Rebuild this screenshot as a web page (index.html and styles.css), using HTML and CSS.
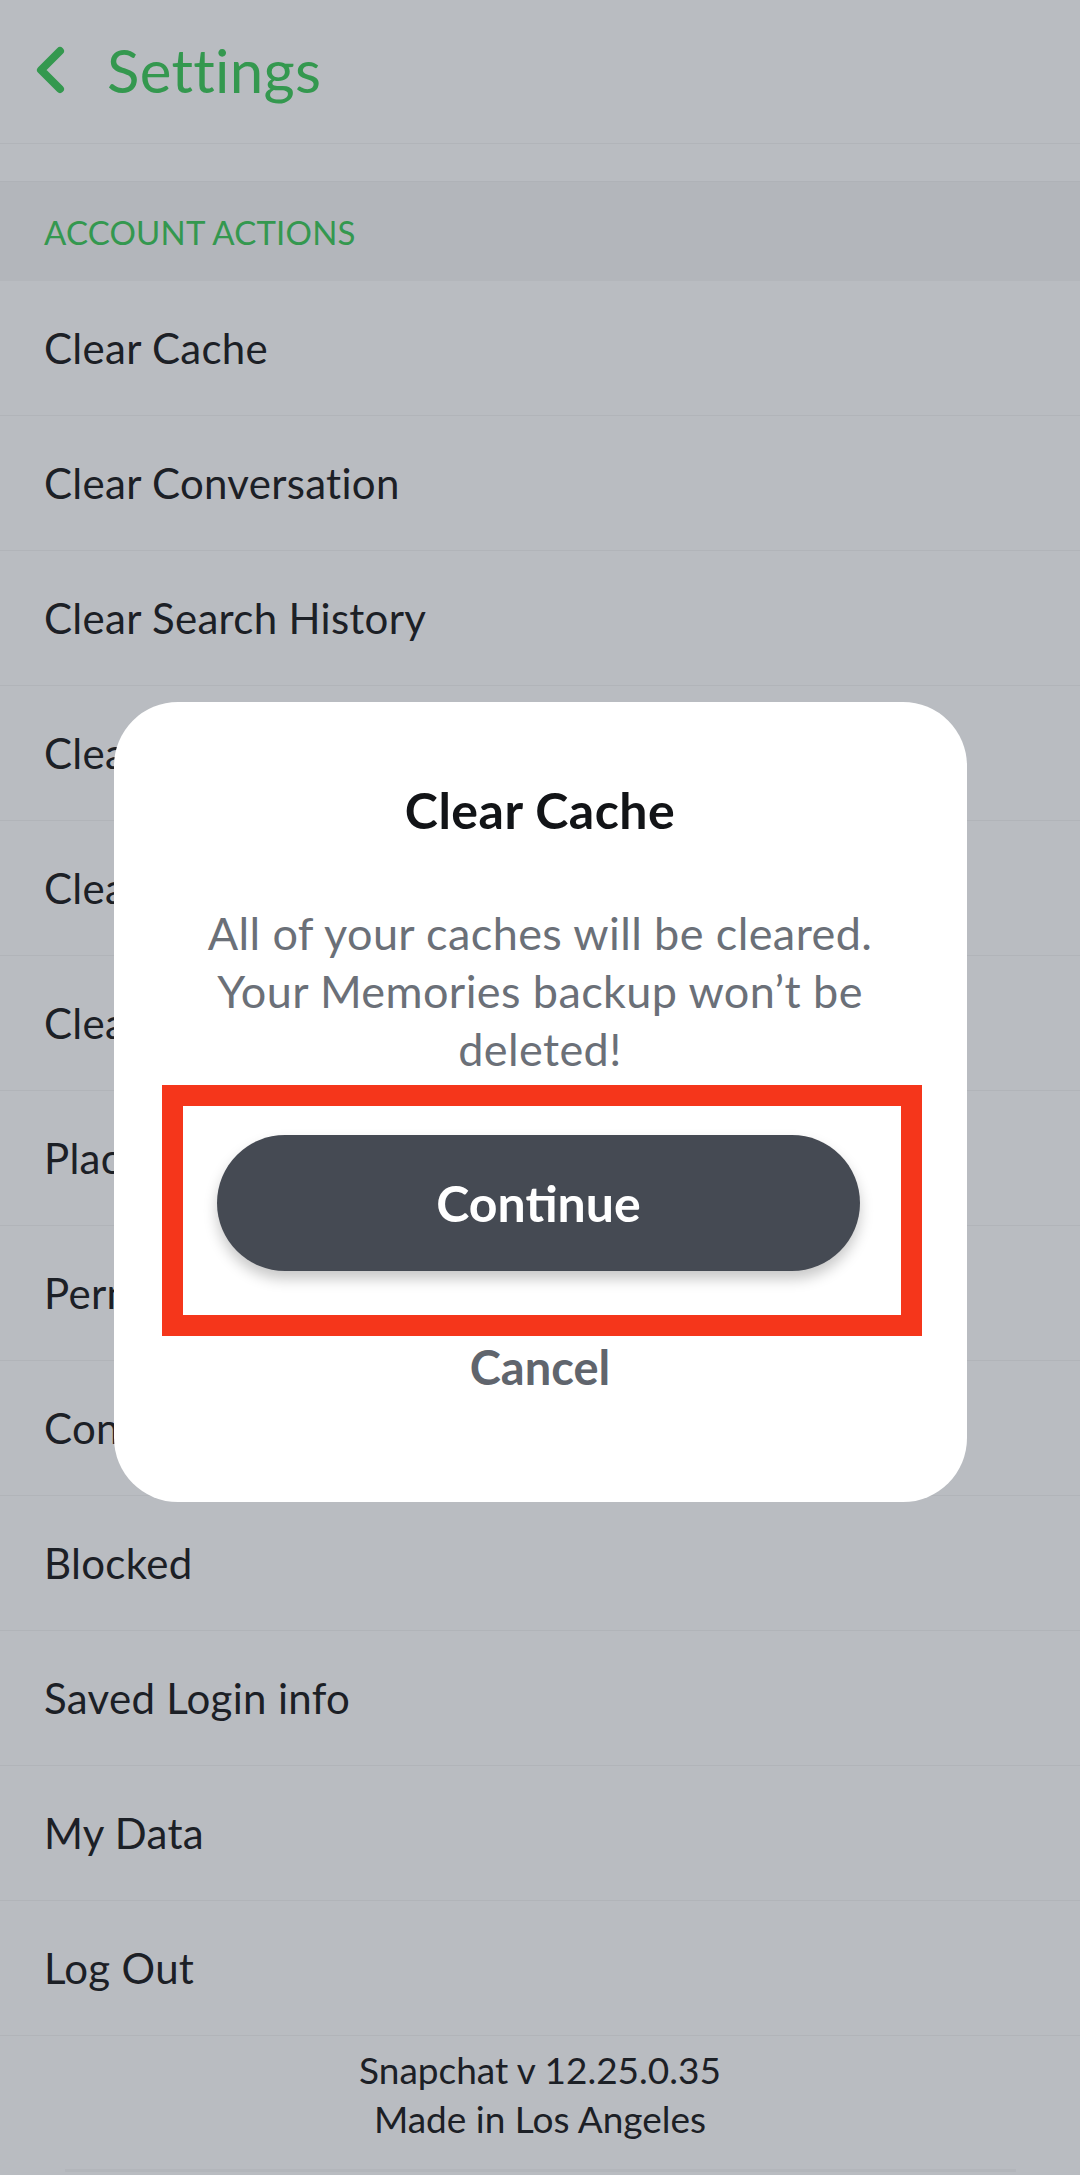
FILE: index.html
```html
<!DOCTYPE html>
<html>
<head>
  <title>Settings</title>
  <link rel="stylesheet" href="styles.css">
</head>
<body>
  <div class="screen">
    <header class="topbar">
      <svg class="back" width="34" height="52" viewBox="0 0 34 52">
        <polyline points="27,7 8,26 27,45" fill="none" stroke="#34984f" stroke-width="8" stroke-linecap="round" stroke-linejoin="round"/>
      </svg>
      <h1>Settings</h1>
    </header>

    <div class="gap"></div>
    <div class="section-title">ACCOUNT ACTIONS</div>

    <ul class="rows">
      <li>Clear Cache</li>
      <li>Clear Conversation</li>
      <li>Clear Search History</li>
      <li>Clear Top Locals</li>
      <li>Clear Scan History</li>
      <li>Clear Lens Data</li>
      <li>Places</li>
      <li>Permissions</li>
      <li>Connected Apps</li>
      <li>Blocked</li>
      <li>Saved Login info</li>
      <li>My Data</li>
      <li>Log Out</li>
    </ul>

    <footer class="about">
      <p>Snapchat v 12.25.0.35<br>Made in Los Angeles</p>
      <div class="home-line"></div>
    </footer>
  </div>

  <!-- alert sheet over the list -->
  <div class="overlay">
    <div class="dialog">
      <h2>Clear Cache</h2>
      <p class="msg">All of your caches will be cleared.<br>Your Memories backup won’t be<br>deleted!</p>
      <div class="highlight">
        <button class="primary">Continue</button>
      </div>
      <button class="cancel">Cancel</button>
    </div>
  </div>
</body>
</html>
```

FILE: styles.css
```css
html, body {
  margin: 0;
  background: #b9bcc1;
}

body {
  width: 1080px;
  height: 2175px;
  position: relative;
  overflow: hidden;
  font-family: Lato, "Open Sans", sans-serif;
  color: #1c2026;
}

.topbar {
  height: 144px;
  display: flex;
  align-items: center;
  padding: 0 0 4px 33px;
  box-sizing: border-box;
  border-bottom: 1px solid #b1b4b9;
}

.back {
  margin-right: 40px;
}

.topbar h1 {
  margin: 0;
  font-size: 60px;
  font-weight: 400;
  line-height: 72px;
  color: #34984f;
  letter-spacing: 0.3px;
}

.gap {
  height: 37px;
}

.section-title {
  height: 100px;
  display: flex;
  align-items: center;
  padding-left: 44px;
  background: #b3b6bb;
  border-top: 1px solid #afb2b7;
  box-sizing: border-box;
  font-size: 33px;
  color: #34984f;
  letter-spacing: 0.2px;
}

.rows {
  list-style: none;
  margin: 0;
  padding: 0;
}

.rows li {
  height: 135px;
  display: flex;
  align-items: center;
  padding-left: 44px;
  box-sizing: border-box;
  border-bottom: 1px solid #b1b4b9;
  font-size: 42px;
  letter-spacing: 0.3px;
}

.about {
  text-align: center;
  font-size: 37px;
}

.about p {
  margin: 0;
  padding-top: 9px;
  line-height: 49px;
}

.home-line {
  height: 3px;
  margin: 26px 64px 0 65px;
  background: #b3b6bb;
}

/* overlay */
.overlay {
  position: absolute;
  top: 0;
  left: 0;
  right: 0;
  padding-top: 702px;
}

.dialog {
  width: 853px;
  height: 800px;
  margin: 0 auto;
  box-sizing: border-box;
  background: #fff;
  border-radius: 64px;
  padding-top: 78px;
  text-align: center;
  display: flex;
  flex-direction: column;
  align-items: center;
}

.dialog h2 {
  margin: 0;
  font-size: 50px;
  line-height: 60px;
  font-weight: 700;
  color: #121417;
  letter-spacing: 0.5px;
}

.msg {
  margin: 64px 0 0;
  font-size: 45px;
  line-height: 58px;
  color: #6b7078;
  letter-spacing: 0.4px;
}

.highlight {
  width: 760px;
  margin: 7px 0 0 4px;
  box-sizing: border-box;
  border: 21px solid #f5361b;
  padding: 29px 40px 44px 34px;
}

.primary {
  display: block;
  width: 643px;
  height: 136px;
  border: 0;
  border-radius: 68px;
  background: #454a53;
  box-shadow: 0 8px 14px rgba(0, 0, 0, 0.22);
  color: #fff;
  font-family: Lato, "Open Sans", sans-serif;
  font-size: 50px;
  font-weight: 700;
}

.cancel {
  margin-top: 3px;
  border: 0;
  background: none;
  padding: 0;
  font-family: Lato, "Open Sans", sans-serif;
  font-size: 47px;
  line-height: 56px;
  font-weight: 700;
  color: #60656d;
}
```
